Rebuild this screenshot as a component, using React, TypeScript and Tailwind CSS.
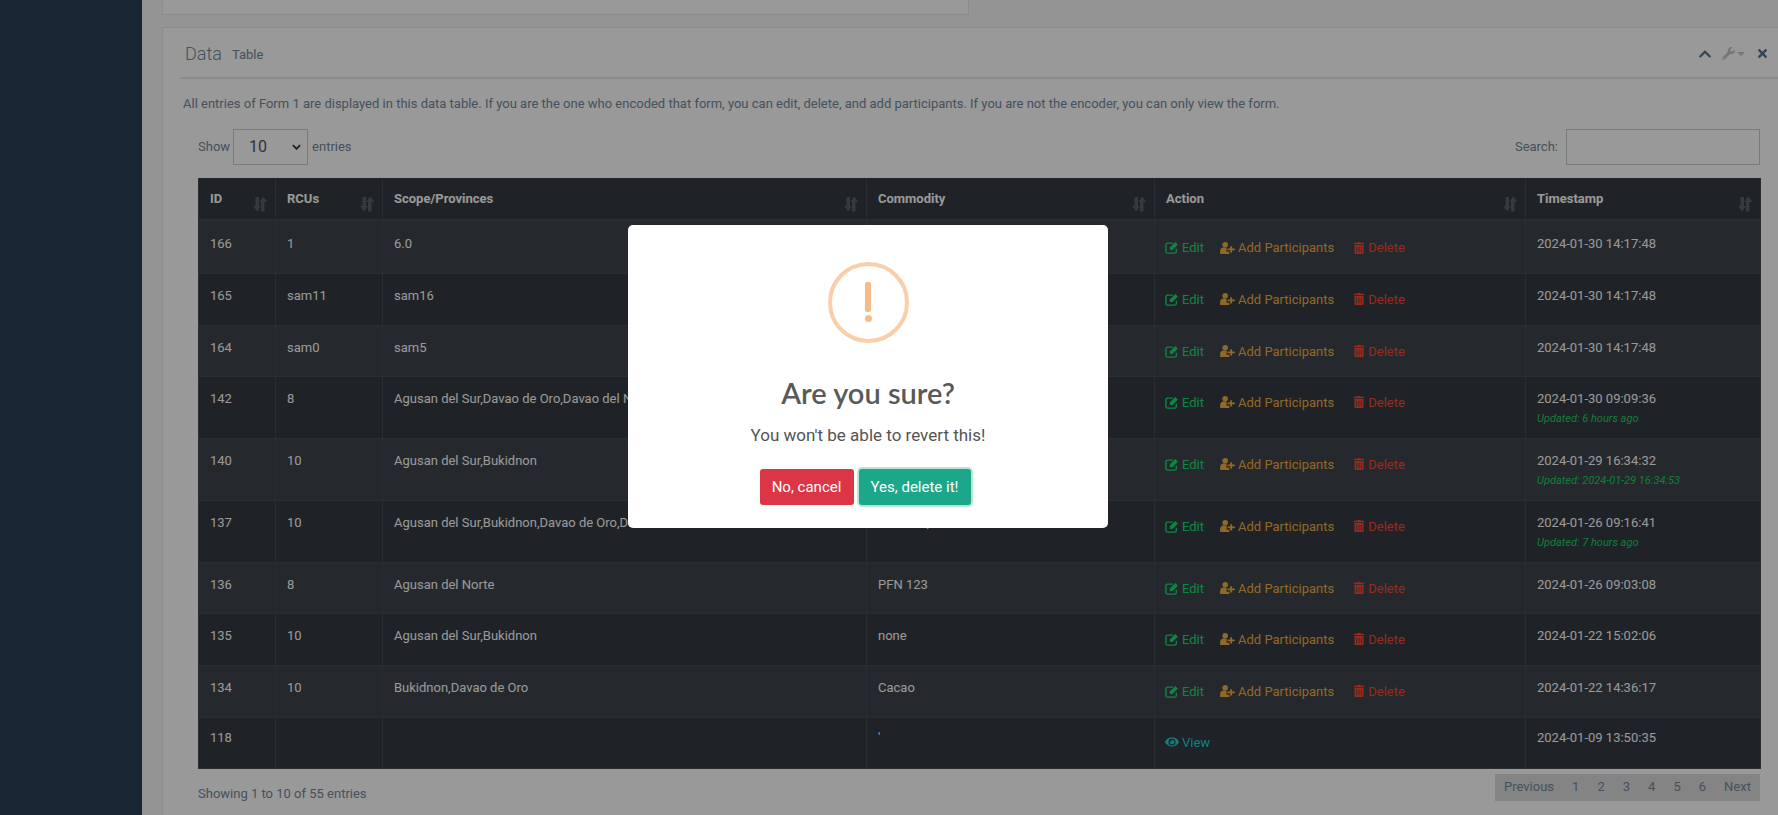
import { FaChevronUp, FaEye, FaTimes, FaTrashAlt, FaWrench } from "react-icons/fa";

const rows = [
  { id: "166", rcu: "1", scope: "6.0", commodity: "", ts: "2024-01-30 14:17:48", h: "h-[53px]" },
  { id: "165", rcu: "sam11", scope: "sam16", commodity: "", ts: "2024-01-30 14:17:48", h: "h-[52px]" },
  { id: "164", rcu: "sam0", scope: "sam5", commodity: "", ts: "2024-01-30 14:17:48", h: "h-[51px]" },
  { id: "142", rcu: "8", scope: "Agusan del Sur,Davao de Oro,Davao del Norte", commodity: "", ts: "2024-01-30 09:09:36", updated: "Updated: 6 hours ago", h: "h-[62px]" },
  { id: "140", rcu: "10", scope: "Agusan del Sur,Bukidnon", commodity: "", ts: "2024-01-29 16:34:32", updated: "Updated: 2024-01-29 16:34:53", h: "h-[62px]" },
  { id: "137", rcu: "10", scope: "Agusan del Sur,Bukidnon,Davao de Oro,Davao del Norte", commodity: "Coconut, Cacao", ts: "2024-01-26 09:16:41", updated: "Updated: 7 hours ago", h: "h-[62px]" },
  { id: "136", rcu: "8", scope: "Agusan del Norte", commodity: "PFN 123", ts: "2024-01-26 09:03:08", h: "h-[51px]" },
  { id: "135", rcu: "10", scope: "Agusan del Sur,Bukidnon", commodity: "none", ts: "2024-01-22 15:02:06", h: "h-[52px]" },
  { id: "134", rcu: "10", scope: "Bukidnon,Davao de Oro", commodity: "Cacao", ts: "2024-01-22 14:36:17", h: "h-[52px]" },
  { id: "118", rcu: "", scope: "", commodity: "'", ts: "2024-01-09 13:50:35", h: "h-[51px]", viewOnly: true },
];

const columns = [
  { label: "ID", w: "w-[77px]" },
  { label: "RCUs", w: "w-[107px]" },
  { label: "Scope/Provinces", w: "w-[484px]" },
  { label: "Commodity", w: "w-[288px]" },
  { label: "Action", w: "w-[371px]" },
  { label: "Timestamp", w: "w-[235px]" },
];

// first and last rows sit a little off the others
const cellTop = (i: number) => (i === 0 ? "pt-[13px]" : i === 9 ? "pt-[10px]" : "pt-[12px]");

// two little arrows, same as the datatables sort glyph
const SortIcon = () => (
  <svg viewBox="0 0 16 16" className="absolute right-[7px] bottom-[7px] size-[16px] text-white/20" fill="currentColor">
    <path d="M3.500 1h3.500v9h2L5.250 15.500 1 10h2.500z" />
    <path d="M12.500 15.500H9V6H7l4.250-5.500L15.500 6h-3z" />
  </svg>
);

const EditIcon = () => (
  <svg viewBox="0 0 16 15" className="w-[14px] h-[13px]" fill="none">
    <path d="M13 9v3a2 2 0 0 1-2 2H3a2 2 0 0 1-2-2V4.500a2 2 0 0 1 2-2h6" stroke="currentColor" strokeWidth="1.600" />
    <path d="M5.500 7.500 11.800 1.200l3 3L8.500 10.500h-3z" fill="currentColor" />
  </svg>
);

const UserPlusIcon = () => (
  <svg viewBox="0 0 16 13" className="w-[15px] h-[12px]" fill="currentColor">
    <circle cx="5.500" cy="3" r="3" />
    <path d="M0 13v-3c0-2.500 1.500-4 3.500-4h3.500v4.500h3V13z" />
    <path d="M11 4.500h2V7h3v2h-3v2.500h-2V9H8V7h3z" />
  </svg>
);

const App = () => {
  return (
    <div className="relative h-screen overflow-hidden flex bg-[#2a3f54] font-['Roboto',sans-serif] text-[13px] text-[#73879c]">
      <div className="w-[142px] shrink-0" />

      <div className="flex-1 min-w-0 bg-[#f7f7f7] pl-[20px]">
        {/* top panel, only its bottom edge is in view */}
        <div className="h-[15px] w-[807px] bg-white border border-t-0 border-[#e6e9ed]" />

        {/* Data table panel */}
        <div className="mt-[12px] h-[900px] w-[1640px] bg-white border border-[#e6e9ed] pl-[17px]">
          <div className="h-[51px] w-[1598px] border-b-2 border-[#e6e9ed] flex items-center pl-[5px] pt-[2px]">
            <h2 className="text-[18px] leading-none font-light">Data</h2>
            <span className="ml-[10px] mt-[2px] text-[13px]">Table</span>
            <div className="ml-auto mr-[9px] flex items-center text-[13px]">
              <FaChevronUp className="size-[14px] text-[#5a738e]" />
              <FaWrench className="ml-[10px] size-[13px] text-[#c5c7cb]" />
              <span className="ml-[2px] mt-[1px] border-x-[4px] border-t-[4px] border-x-transparent border-t-[#c5c7cb]" />
              <FaTimes className="ml-[11px] size-[13px] text-[#5a738e]" />
            </div>
          </div>

          <p className="mt-[16px] ml-[3px] leading-[18px]">
            All entries of Form 1 are displayed in this data table. If you are the one who encoded that form, you can edit, delete, and add participants. If you are not the encoder, you can only view the form.
          </p>

          <div className="ml-[18px] w-[1562px]">
            <div className="mt-[16px] h-[36px] flex items-center">
              <span>Show</span>
              <div className="ml-[3px] h-[36px] w-[75px] border border-[#ccc] flex items-center justify-between pl-[15px] pr-[6px] text-[16px] text-[#555]">
                10
                <svg viewBox="0 0 10 6" className="w-[9px] h-[6px]" fill="none" stroke="#333" strokeWidth="2">
                  <path d="M1 1l4 4 4-4" />
                </svg>
              </div>
              <span className="ml-[4px]">entries</span>
              <span className="ml-auto">Search:</span>
              <div className="ml-[8px] h-[36px] w-[194px] border border-[#ccc]" />
            </div>

            <table className="mt-[13px] w-[1562px] table-fixed border-collapse bg-[#343a40] text-[#fff]">
              <thead>
                <tr className="h-[42px]">
                  {columns.map((c) => (
                    <th key={c.label} className={`${c.w} relative border border-[#454d55] border-b-2 border-t-0 pl-[11px] text-left align-middle font-bold`}>
                      {c.label}
                      <SortIcon />
                    </th>
                  ))}
                </tr>
              </thead>
              <tbody>
                {rows.map((r, i) => (
                  <tr key={r.id} className={`${r.h} ${i % 2 === 0 ? "bg-[#3e444a]" : ""}`}>
                    <td className={`border border-[#454d55] pl-[11px] align-top leading-[19px] ${cellTop(i)}`}>{r.id}</td>
                    <td className={`border border-[#454d55] pl-[11px] align-top leading-[19px] ${cellTop(i)}`}>{r.rcu}</td>
                    <td className={`border border-[#454d55] pl-[11px] align-top leading-[19px] whitespace-nowrap overflow-hidden ${cellTop(i)}`}>{r.scope}</td>
                    <td className={`border border-[#454d55] pl-[11px] align-top leading-[19px] ${cellTop(i)}`}>{r.commodity}</td>
                    <td className={`border border-[#454d55] pl-[10px] align-top leading-[19px] ${i === 0 ? "pt-[17px]" : i === 9 ? "pt-[15px]" : "pt-[16px]"}`}>
                      {r.viewOnly ? (
                        <span className="inline-flex items-center gap-[3px] text-[#22d3d3]">
                          <FaEye className="size-[14px]" />
                          View
                        </span>
                      ) : (
                        <div className="flex items-center">
                          <span className="inline-flex items-center gap-[3px] text-[#18e070]">
                            <EditIcon />
                            Edit
                          </span>
                          <span className="ml-[16px] inline-flex items-center gap-[3px] text-[#f0b040]">
                            <UserPlusIcon />
                            Add Participants
                          </span>
                          <span className="ml-[19px] inline-flex items-center gap-[3px] text-[#fb4a30]">
                            <FaTrashAlt className="size-[12px]" />
                            Delete
                          </span>
                        </div>
                      )}
                    </td>
                    <td className={`border border-[#454d55] pl-[11px] align-top leading-[19px] ${cellTop(i)}`}>
                      {r.ts}
                      {r.updated && <div className="mt-[4px] text-[11px] leading-[14px] italic text-[#1fd060]">{r.updated}</div>}
                    </td>
                  </tr>
                ))}
              </tbody>
            </table>

            <div className="mt-[5px] flex items-start justify-between">
              <span className="mt-[10px]">Showing 1 to 10 of 55 entries</span>
              <div className="h-[27px] w-[265px] bg-[#ddd] flex items-center justify-between pl-[9px] pr-[9px]">
                <span>Previous</span>
                <span>1</span>
                <span>2</span>
                <span>3</span>
                <span>4</span>
                <span>5</span>
                <span>6</span>
                <span>Next</span>
              </div>
            </div>
          </div>
        </div>
      </div>

      {/* sweetalert overlay */}
      <div className="absolute inset-0 bg-black/40">
        <div className="ml-[628px] mt-[225px] h-[303px] w-[480px] rounded-[5px] bg-white flex flex-col items-center text-[#545454]">
          <div className="mt-[37px] size-[81px] rounded-full border-[4px] border-[#facea8] flex flex-col items-center">
            <span className="mt-[16px] h-[30px] w-[6px] rounded-[2px] bg-[#f8bb86]" />
            <span className="mt-[3px] size-[7px] rounded-full bg-[#f8bb86]" />
          </div>
          <h2 className="mt-[25px] text-[29px] leading-[50px] font-semibold font-['Lato',sans-serif] text-[#595959]">Are you sure?</h2>
          <p className="mt-[4px] text-[17px] leading-[27px]">You won't be able to revert this!</p>
          <div className="mt-[20px] mr-[6px] flex items-center gap-[5px]">
            <button className="h-[36px] w-[94px] rounded-[3px] bg-[#dc3545] text-[15px] text-white">No, cancel</button>
            <button className="h-[36px] w-[112px] rounded-[3px] bg-[#1ca78a] text-[15px] text-white ring-2 ring-[#b5e8cd]">Yes, delete it!</button>
          </div>
        </div>
      </div>
    </div>
  );
};

export default App;
